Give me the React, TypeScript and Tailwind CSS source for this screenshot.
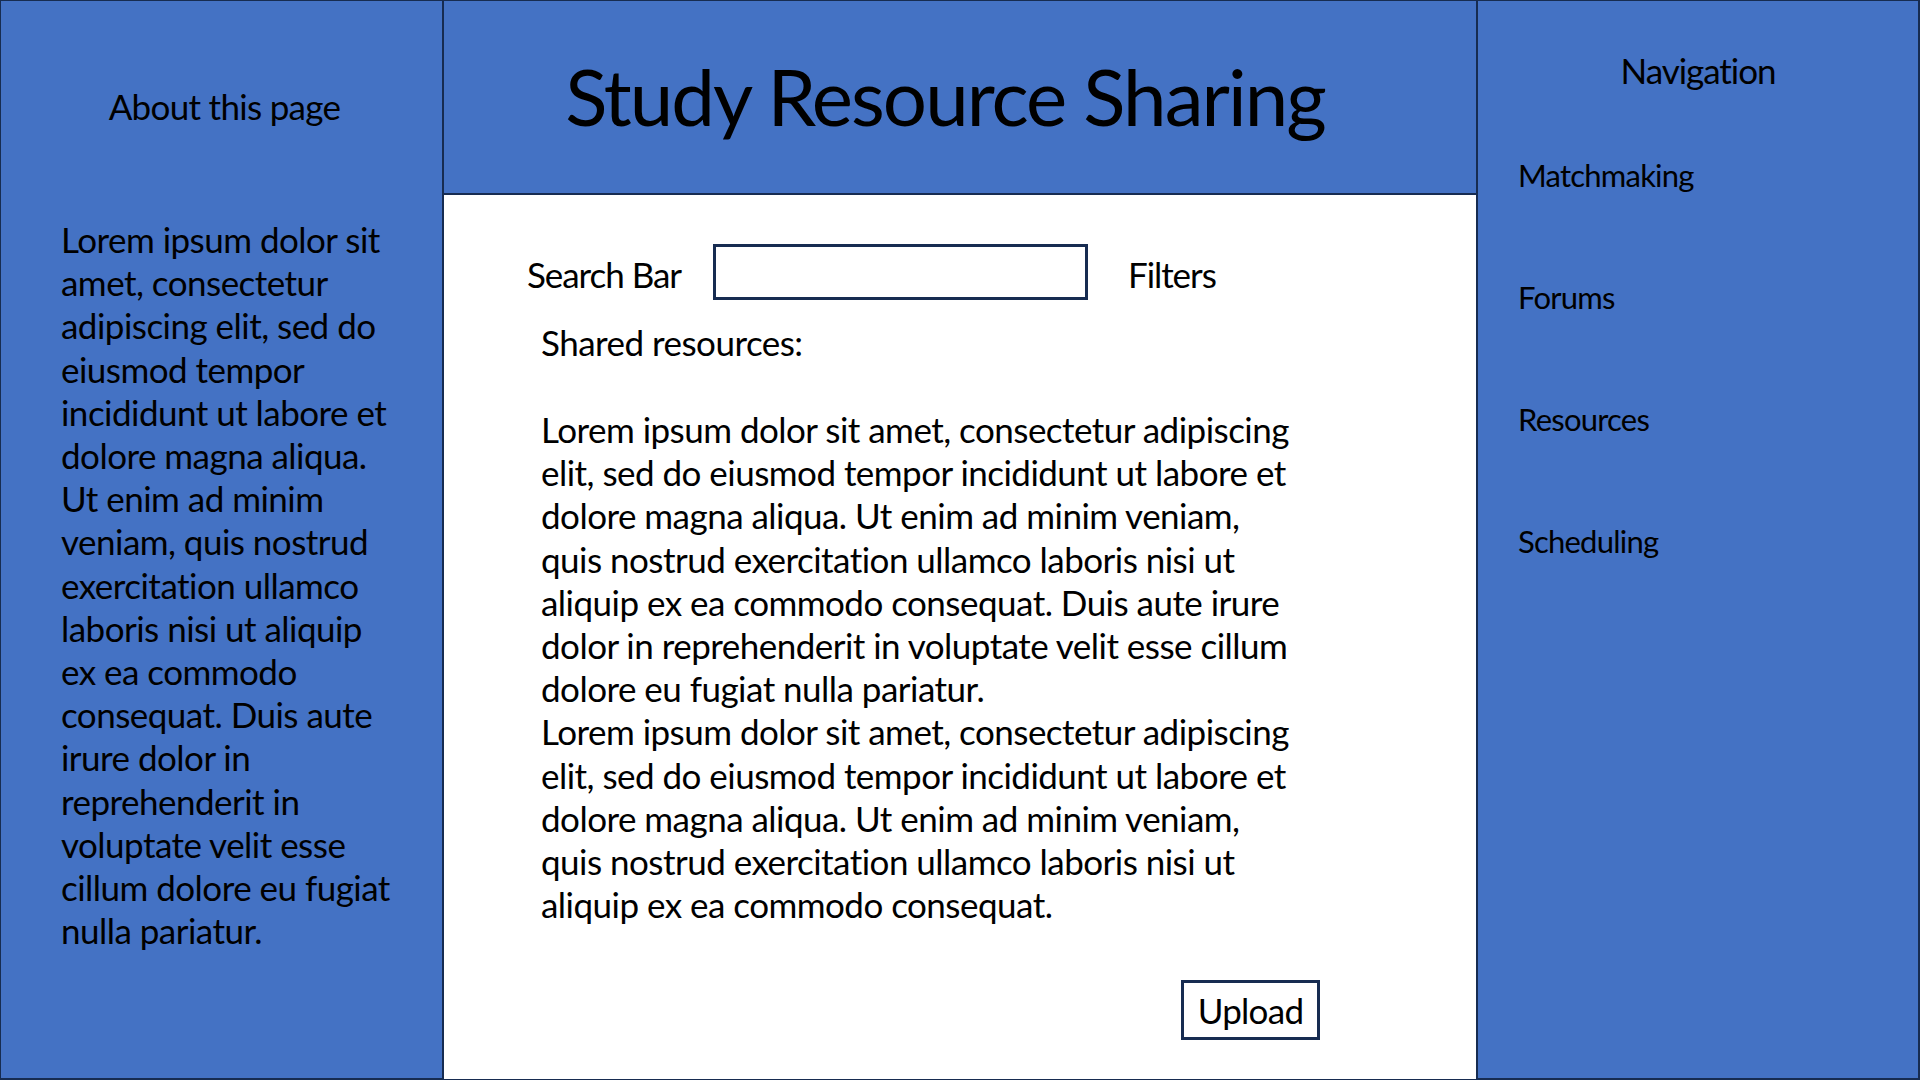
import React from 'react';

const FONT = "font-['Lato','Open_Sans',sans-serif]";

const ABOUT_LINES = [
  'Lorem ipsum dolor sit',
  'amet, consectetur',
  'adipiscing elit, sed do',
  'eiusmod tempor',
  'incididunt ut labore et',
  'dolore magna aliqua.',
  'Ut enim ad minim',
  'veniam, quis nostrud',
  'exercitation ullamco',
  'laboris nisi ut aliquip',
  'ex ea commodo',
  'consequat. Duis aute',
  'irure dolor in',
  'reprehenderit in',
  'voluptate velit esse',
  'cillum dolore eu fugiat',
  'nulla pariatur.',
];

const SHARED_LINES = [
  'Lorem ipsum dolor sit amet, consectetur adipiscing',
  'elit, sed do eiusmod tempor incididunt ut labore et',
  'dolore magna aliqua. Ut enim ad minim veniam,',
  'quis nostrud exercitation ullamco laboris nisi ut',
  'aliquip ex ea commodo consequat. Duis aute irure',
  'dolor in reprehenderit in voluptate velit esse cillum',
  'dolore eu fugiat nulla pariatur.',
  'Lorem ipsum dolor sit amet, consectetur adipiscing',
  'elit, sed do eiusmod tempor incididunt ut labore et',
  'dolore magna aliqua. Ut enim ad minim veniam,',
  'quis nostrud exercitation ullamco laboris nisi ut',
  'aliquip ex ea commodo consequat.',
];

const NAV_ITEMS = ['Matchmaking', 'Forums', 'Resources', 'Scheduling'];

function Lines({ lines }: { lines: string[] }) {
  return (
    <>
      {lines.map((line, i) => (
        <div key={i} className="whitespace-nowrap">{line}</div>
      ))}
    </>
  );
}

export default function App() {
  return (
    <div className={`flex h-[1080px] w-[1920px] overflow-hidden bg-white text-black ${FONT}`}>

      {/* About panel */}
      <aside className="w-[444px] shrink-0 bg-[#4472c4] border-t border-l border-b-2 border-r-2 border-[#172c51]">
        <h2 className="pt-[84px] pl-[6px] text-center text-[35px] leading-[43px] tracking-[-0.02em]">About this page</h2>
        <div className="mt-[90px] pl-[60px] text-[35px] leading-[43.2px] tracking-[-0.015em]">
          <Lines lines={ABOUT_LINES} />
        </div>
      </aside>

      {/* Centre column */}
      <main className="flex flex-1 flex-col">
        <header className="flex h-[195px] shrink-0 items-center justify-center border-t border-b-2 border-[#172c51] bg-[#4472c4] pr-[30px] pb-[2px]">
          <h1 className="text-[78px] leading-none tracking-[-0.025em]">Study Resource Sharing</h1>
        </header>

        <section className="flex flex-1 flex-col border-b border-[#172c51] text-[35px]">
          <div className="mt-[49px] flex items-center pl-[83px] tracking-[-0.03em]">
            <span className="pt-[5px] leading-[43px]">Search Bar</span>
            <div className="ml-[32px] h-[56px] w-[375px] border-[3px] border-[#172c51]" />
            <span className="ml-[40px] pt-[5px] leading-[43px]">Filters</span>
          </div>

          <div className="mt-[21px] pl-[97px] leading-[43px] tracking-[-0.015em]">Shared resources:</div>

          <div className="mt-[44px] pl-[97px] leading-[43.2px] tracking-[-0.015em]">
            <Lines lines={SHARED_LINES} />
          </div>

          <div className="mt-[54px] flex pl-[737px]">
            <button className="flex h-[60px] w-[139px] items-center justify-center border-[3px] border-[#172c51] bg-white leading-none tracking-[-0.02em]">
              Upload
            </button>
          </div>
        </section>
      </main>

      {/* Navigation panel */}
      <aside className="w-[444px] shrink-0 bg-[#4472c4] border-t border-r-2 border-b-2 border-l-2 border-[#172c51]">
        <h2 className="pt-[48px] text-center text-[35px] leading-[43px] tracking-[-0.03em]">Navigation</h2>
        <nav className="mt-[62px] flex flex-col gap-[79px] pl-[40px] text-[31px] tracking-[-0.025em]">
          {NAV_ITEMS.map((item) => (
            <a key={item} className="leading-[43px]">{item}</a>
          ))}
        </nav>
      </aside>

    </div>
  );
}
